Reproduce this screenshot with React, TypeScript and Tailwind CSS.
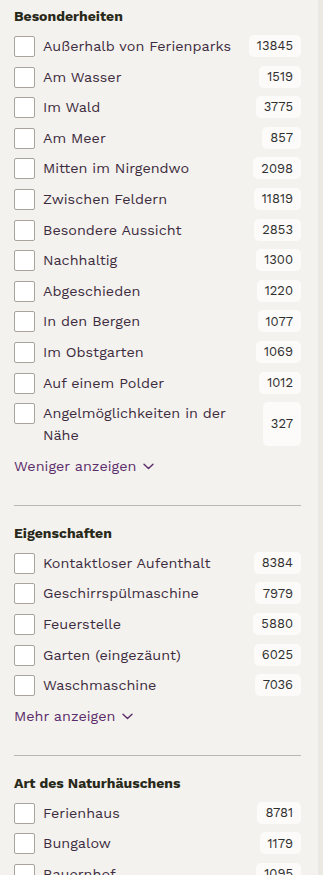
import React from "react";

type Item = { label: string; count: number };

const sections: { title: string; items: Item[]; toggle?: string }[] = [
    {
        title: "Besonderheiten",
        items: [
            { label: "Außerhalb von Ferienparks", count: 13845 },
            { label: "Am Wasser", count: 1519 },
            { label: "Im Wald", count: 3775 },
            { label: "Am Meer", count: 857 },
            { label: "Mitten im Nirgendwo", count: 2098 },
            { label: "Zwischen Feldern", count: 11819 },
            { label: "Besondere Aussicht", count: 2853 },
            { label: "Nachhaltig", count: 1300 },
            { label: "Abgeschieden", count: 1220 },
            { label: "In den Bergen", count: 1077 },
            { label: "Im Obstgarten", count: 1069 },
            { label: "Auf einem Polder", count: 1012 },
            { label: "Angelmöglichkeiten in der Nähe", count: 327 },
        ],
        toggle: "Weniger anzeigen",
    },
    {
        title: "Eigenschaften",
        items: [
            { label: "Kontaktloser Aufenthalt", count: 8384 },
            { label: "Geschirrspülmaschine", count: 7979 },
            { label: "Feuerstelle", count: 5880 },
            { label: "Garten (eingezäunt)", count: 6025 },
            { label: "Waschmaschine", count: 7036 },
        ],
        toggle: "Mehr anzeigen",
    },
    {
        title: "Art des Naturhäuschens",
        items: [
            { label: "Ferienhaus", count: 8781 },
            { label: "Bungalow", count: 1179 },
            { label: "Bauernhof", count: 1095 },
        ],
    },
];

function Chevron() {
    return (
        <svg width="11" height="7" viewBox="0 0 11 7" fill="none" className="ml-[7px] mt-[2px]">
            <path d="M1 1.2l4.5 4.3L10 1.2" stroke="#5b2d6b" strokeWidth="1.4" strokeLinecap="round" strokeLinejoin="round" />
        </svg>
    );
}

function Row({ item }: { item: Item }) {
    return (
        <label className="flex items-stretch">
            <span className="mt-[1px] h-[21px] w-[21px] shrink-0 rounded-[2px] border border-[#aaa39c] bg-white" />
            <span className="ml-[8px] flex-1 pr-1 text-[14.4px] leading-[22px] text-[#3d2c40]">{item.label}</span>
            <span className="flex min-h-[22px] items-center rounded-[5px] bg-[#fcfbf9] px-[8px] text-[13px] text-[#2f2f2f]">
                {item.count}
            </span>
        </label>
    );
}

export default function App() {
    return (
        <div className="flex min-h-screen bg-[#f4f2ee] font-['Work_Sans','Open_Sans',sans-serif]">
            <div className="flex-1 px-[14px] pt-[6px]">
                {sections.map((s, i) => (
                    <div key={s.title}>
                        {i > 0 && <div className="mb-[17px] mt-[28px] h-px w-[287px] bg-[#bcb8b1]" />}
                        <h3 className="text-[14px] font-bold leading-[20px] text-[#29291a]">{s.title}</h3>
                        <div className="mt-[9px] flex w-[287px] flex-col gap-[8.6px]">
                            {s.items.map((it) => (
                                <Row key={it.label} item={it} />
                            ))}
                            {s.toggle && (
                                <button className="flex items-center text-[14.4px] leading-[22px] text-[#5b2d6b]">
                                    {s.toggle}
                                    <Chevron />
                                </button>
                            )}
                        </div>
                    </div>
                ))}
            </div>
            <div className="w-[5px] bg-[#ebe9e4]" />
        </div>
    );
}
